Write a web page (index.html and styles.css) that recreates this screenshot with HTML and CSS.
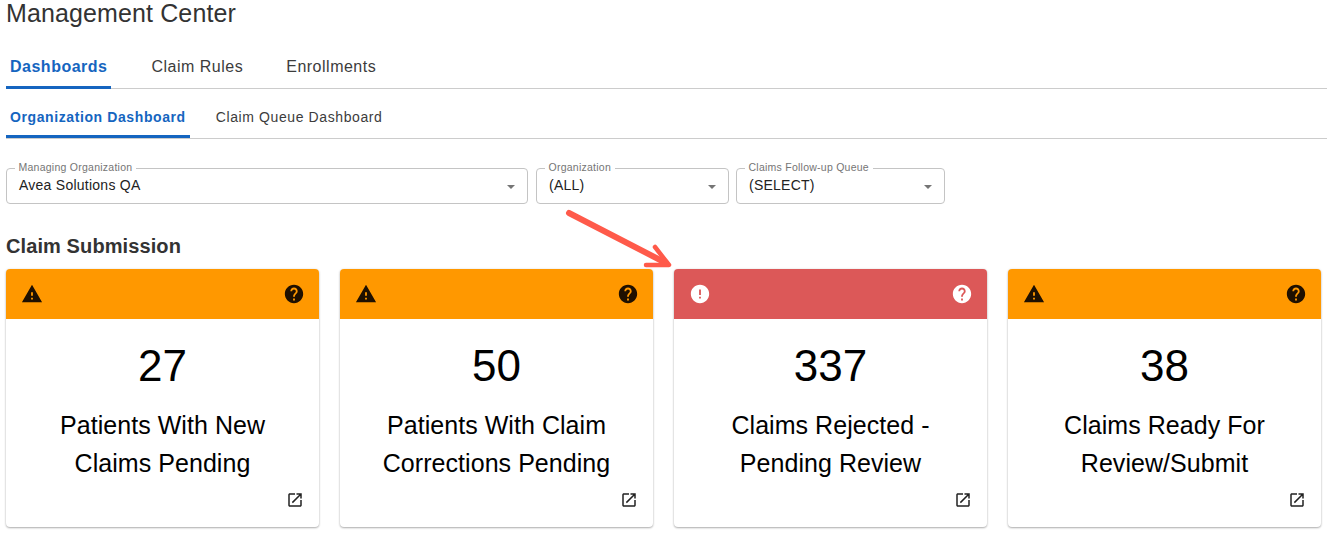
FILE: index.html
```html
<!DOCTYPE html>
<html lang="en">
<head>
    <meta charset="UTF-8">
    <meta name="viewport" content="width=device-width, initial-scale=1.0">
    <title>Management Center</title>
    <link rel="stylesheet" href="styles.css">
</head>
<body>
    <div class="page">
        <h1 class="page-title">Management Center</h1>

        <div class="tabs">
            <a class="tab active">Dashboards</a>
            <a class="tab">Claim Rules</a>
            <a class="tab">Enrollments</a>
        </div>

        <div class="subtabs">
            <a class="subtab active">Organization Dashboard</a>
            <a class="subtab">Claim Queue Dashboard</a>
        </div>

        <div class="filters">
            <div class="select select-managing">
                <span class="select-label">Managing Organization</span>
                <span class="select-value">Avea Solutions QA</span>
                <span class="select-caret"></span>
            </div>
            <div class="select select-org">
                <span class="select-label">Organization</span>
                <span class="select-value">(ALL)</span>
                <span class="select-caret"></span>
            </div>
            <div class="select select-queue">
                <span class="select-label">Claims Follow-up Queue</span>
                <span class="select-value">(SELECT)</span>
                <span class="select-caret"></span>
            </div>
        </div>

        <h2 class="section-title">Claim Submission</h2>

        <div class="cards">
            <div class="card">
                <div class="card-head warning">
                    <svg class="icon" viewBox="0 0 24 24"><path d="M1 21h22L12 2 1 21zm12-3h-2v-2h2v2zm0-4h-2v-4h2v4z"/></svg>
                    <svg class="icon" viewBox="0 0 24 24"><path d="M12 2C6.48 2 2 6.48 2 12s4.48 10 10 10 10-4.48 10-10S17.52 2 12 2zm1 17h-2v-2h2v2zm2.07-7.75l-.9.92C13.45 12.9 13 13.5 13 15h-2v-.5c0-1.1.45-2.1 1.17-2.83l1.24-1.26c.37-.36.59-.86.59-1.41 0-1.1-.9-2-2-2s-2 .9-2 2H8c0-2.21 1.79-4 4-4s4 1.79 4 4c0 .88-.36 1.68-.93 2.25z"/></svg>
                </div>
                <div class="card-body">
                    <div class="card-count">27</div>
                    <div class="card-label">Patients With New<br>Claims Pending</div>
                    <svg class="link-icon" viewBox="0 0 24 24"><path d="M19 19H5V5h7V3H5c-1.11 0-2 .9-2 2v14c0 1.1.89 2 2 2h14c1.1 0 2-.9 2-2v-7h-2v7zM14 3v2h3.59l-9.83 9.83 1.41 1.41L19 6.41V10h2V3h-7z"/></svg>
                </div>
            </div>

            <div class="card">
                <div class="card-head warning">
                    <svg class="icon" viewBox="0 0 24 24"><path d="M1 21h22L12 2 1 21zm12-3h-2v-2h2v2zm0-4h-2v-4h2v4z"/></svg>
                    <svg class="icon" viewBox="0 0 24 24"><path d="M12 2C6.48 2 2 6.48 2 12s4.48 10 10 10 10-4.48 10-10S17.52 2 12 2zm1 17h-2v-2h2v2zm2.07-7.75l-.9.92C13.45 12.9 13 13.5 13 15h-2v-.5c0-1.1.45-2.1 1.17-2.83l1.24-1.26c.37-.36.59-.86.59-1.41 0-1.1-.9-2-2-2s-2 .9-2 2H8c0-2.21 1.79-4 4-4s4 1.79 4 4c0 .88-.36 1.68-.93 2.25z"/></svg>
                </div>
                <div class="card-body">
                    <div class="card-count">50</div>
                    <div class="card-label">Patients With Claim<br>Corrections Pending</div>
                    <svg class="link-icon" viewBox="0 0 24 24"><path d="M19 19H5V5h7V3H5c-1.11 0-2 .9-2 2v14c0 1.1.89 2 2 2h14c1.1 0 2-.9 2-2v-7h-2v7zM14 3v2h3.59l-9.83 9.83 1.41 1.41L19 6.41V10h2V3h-7z"/></svg>
                </div>
            </div>

            <div class="card">
                <div class="card-head danger">
                    <svg class="icon" viewBox="0 0 24 24"><path d="M12 2C6.48 2 2 6.48 2 12s4.48 10 10 10 10-4.48 10-10S17.52 2 12 2zm1 15h-2v-2h2v2zm0-4h-2V7h2v6z"/></svg>
                    <svg class="icon" viewBox="0 0 24 24"><path d="M12 2C6.48 2 2 6.48 2 12s4.48 10 10 10 10-4.48 10-10S17.52 2 12 2zm1 17h-2v-2h2v2zm2.07-7.75l-.9.92C13.45 12.9 13 13.5 13 15h-2v-.5c0-1.1.45-2.1 1.17-2.83l1.24-1.26c.37-.36.59-.86.59-1.41 0-1.1-.9-2-2-2s-2 .9-2 2H8c0-2.21 1.79-4 4-4s4 1.79 4 4c0 .88-.36 1.68-.93 2.25z"/></svg>
                </div>
                <div class="card-body">
                    <div class="card-count">337</div>
                    <div class="card-label">Claims Rejected -<br>Pending Review</div>
                    <svg class="link-icon" viewBox="0 0 24 24"><path d="M19 19H5V5h7V3H5c-1.11 0-2 .9-2 2v14c0 1.1.89 2 2 2h14c1.1 0 2-.9 2-2v-7h-2v7zM14 3v2h3.59l-9.83 9.83 1.41 1.41L19 6.41V10h2V3h-7z"/></svg>
                </div>
            </div>

            <div class="card">
                <div class="card-head warning">
                    <svg class="icon" viewBox="0 0 24 24"><path d="M1 21h22L12 2 1 21zm12-3h-2v-2h2v2zm0-4h-2v-4h2v4z"/></svg>
                    <svg class="icon" viewBox="0 0 24 24"><path d="M12 2C6.48 2 2 6.48 2 12s4.48 10 10 10 10-4.48 10-10S17.52 2 12 2zm1 17h-2v-2h2v2zm2.07-7.75l-.9.92C13.45 12.9 13 13.5 13 15h-2v-.5c0-1.1.45-2.1 1.17-2.83l1.24-1.26c.37-.36.59-.86.59-1.41 0-1.1-.9-2-2-2s-2 .9-2 2H8c0-2.21 1.79-4 4-4s4 1.79 4 4c0 .88-.36 1.68-.93 2.25z"/></svg>
                </div>
                <div class="card-body">
                    <div class="card-count">38</div>
                    <div class="card-label">Claims Ready For<br>Review/Submit</div>
                    <svg class="link-icon" viewBox="0 0 24 24"><path d="M19 19H5V5h7V3H5c-1.11 0-2 .9-2 2v14c0 1.1.89 2 2 2h14c1.1 0 2-.9 2-2v-7h-2v7zM14 3v2h3.59l-9.83 9.83 1.41 1.41L19 6.41V10h2V3h-7z"/></svg>
                </div>
            </div>
        </div>

        <!-- annotation arrow drawn over the screenshot -->
        <svg class="arrow" width="120" height="70" viewBox="0 0 120 70">
            <path d="M7 5 L104 55" />
            <path class="arrow-head" d="M93 39 L107 57 L84 57" />
        </svg>
    </div>
</body>
</html>
```

FILE: styles.css
```css
* { box-sizing: border-box; }
html, body { margin: 0; padding: 0; }
body { font-family: "Liberation Sans", Arial, sans-serif; color: #000; background: #fff; }

.page { position: relative; height: 535px; padding: 0 6px; overflow: hidden; }
.page-title { margin: 0; height: 45px; font-size: 25px; line-height: 27px; font-weight: 400; letter-spacing: 0.12px; color: #333; }

.tabs { display: flex; height: 44px; border-bottom: 1px solid #ccc; margin-right: -6px; }
.tab { display: flex; align-items: center; height: 44px; padding: 0 4px 1px; margin-right: 35px; font-size: 16px; letter-spacing: 0.5px; color: #3c3c3c; }
.tab.active { color: #1565c0; font-weight: 700; border-bottom: 3px solid #1565c0; padding: 2px 4px 0; margin-right: 36px; }

.subtabs { display: flex; height: 50px; padding-top: 6px; border-bottom: 1px solid #ccc; margin-right: -6px; }
.subtab { display: flex; align-items: center; height: 43px; padding: 0 4px; margin-right: 22px; font-size: 14px; letter-spacing: 0.6px; color: #3c3c3c; }
.subtab.active { color: #1565c0; font-weight: 700; border-bottom: 3px solid #1565c0; padding-top: 3px; }

.filters { display: flex; gap: 8px; margin-top: 29px; }
.select { position: relative; height: 36px; padding: 8px 12px; border: 1px solid #c4c4c4; border-radius: 4px; }
.select-managing { width: 522px; }
.select-org { width: 193px; margin-right: -1px; }
.select-queue { width: 209px; }
.select-label { position: absolute; left: 7.5px; top: -7px; padding: 0 4px; background: #fff; font-size: 10.5px; line-height: 11px; letter-spacing: 0.25px; color: #757575; }
.select-value { display: block; font-size: 14px; line-height: 16px; letter-spacing: 0.25px; color: #222; }
.select-caret { position: absolute; right: 12px; top: 16px; border-left: 4.5px solid transparent; border-right: 4.5px solid transparent; border-top: 4.5px solid #757575; }

.section-title { margin: 30px 0 0; height: 35px; font-size: 20px; line-height: 24px; font-weight: 700; letter-spacing: 0.1px; color: #333; }

.cards { display: grid; grid-template-columns: repeat(4, 1fr); gap: 21px; }
.card { height: 258px; border-radius: 4px; overflow: hidden; background: #fff; box-shadow: 0 1px 2px rgba(0, 0, 0, 0.3), 0 0 3px rgba(0, 0, 0, 0.08); }
.card-head { display: flex; justify-content: space-between; align-items: center; height: 50px; padding: 0 14px 0 14.5px; }
.card-head.warning { background: #ff9800; color: #1f1000; }
.card-head.danger { background: #dc5858; color: #fff; }
.icon { width: 22px; height: 22px; fill: currentColor; }

.card-body { position: relative; height: 208px; padding-top: 23px; text-align: center; }
.card-count { font-size: 44px; line-height: 48px; color: #000; }
.card-label { margin-top: 16px; font-size: 25px; line-height: 38px; letter-spacing: 0.05px; color: #000; }
.link-icon { position: absolute; right: 15px; bottom: 18px; width: 18px; height: 18px; fill: #222; }

.arrow { position: absolute; left: 562px; top: 208px; fill: none; stroke: #ff5a4a; stroke-width: 6px; stroke-linecap: round; stroke-linejoin: round; }
.arrow-head { stroke-width: 4.5px; }
```
